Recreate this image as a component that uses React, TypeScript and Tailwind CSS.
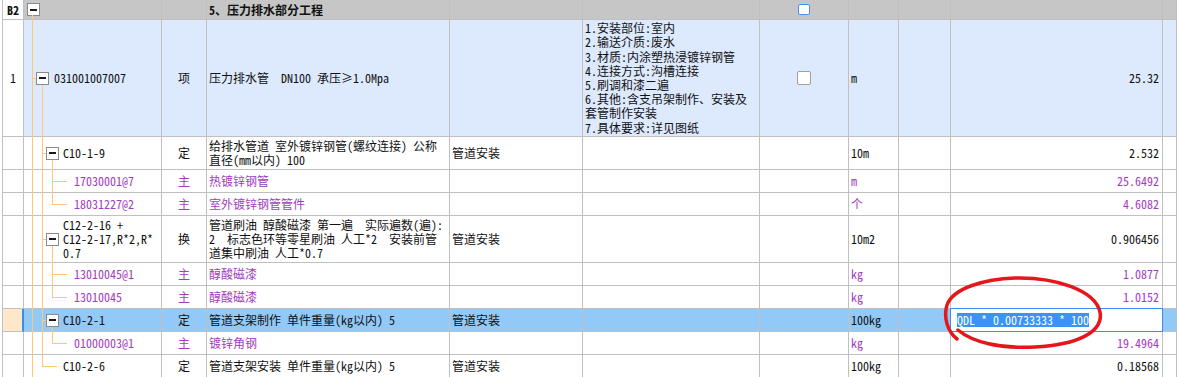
import React, { ReactNode } from "react";

const LINE = "border-r border-b border-[#c0c0c0]";
const GRID =
  "grid grid-cols-[21px_138px_45px_243px_133px_177px_89px_50px_52px_212px_1fr]";

function Minus() {
  return (
    <span className="flex h-[13px] w-[13px] shrink-0 items-center justify-center border border-[#8a8a8a] bg-white">
      <span className="h-[2px] w-[7px] bg-[#1a1a1a]" />
    </span>
  );
}

type RowProps = {
  h: string;
  bg?: string;
  numCell?: ReactNode;
  numClass?: string;
  code: ReactNode;
  codeClass: string;
  type?: string;
  name?: ReactNode;
  work?: string;
  desc?: ReactNode;
  check?: ReactNode;
  unit?: string;
  amount?: ReactNode;
  amountClass?: string;
  purple?: boolean;
  lastClass?: string;
};

function Row(p: RowProps) {
  const color = p.purple ? "text-[#a23cc0]" : "text-[#111111]";
  return (
    <div className={`${GRID} ${p.h} ${p.bg ?? "bg-white"} ${color}`}>
      <div
        className={`flex items-center justify-center ${
          p.numClass ?? `${LINE} bg-white`
        }`}
      >
        {p.numCell}
      </div>
      <div className={`${LINE} flex items-center ${p.codeClass}`}>{p.code}</div>
      <div className={`${LINE} flex items-center justify-center`}>{p.type}</div>
      <div className={`${LINE} flex items-center pl-[2px] whitespace-pre`}>{p.name}</div>
      <div className={`${LINE} flex items-center pl-[2px]`}>{p.work}</div>
      <div className={`${LINE} flex items-center pl-[2px]`}>{p.desc}</div>
      <div className={`${LINE} flex items-center justify-center`}>{p.check}</div>
      <div className={`${LINE} flex items-center pl-[2px]`}>{p.unit}</div>
      <div className={LINE} />
      <div
        className={`${LINE} relative flex items-center justify-end pr-[3px] ${
          p.amountClass ?? ""
        }`}
      >
        {p.amount}
      </div>
      <div className={`${LINE} ${p.lastClass ?? ""}`} />
    </div>
  );
}

function Boxed({ text, gap = "ml-[4px]" }: { text: ReactNode; gap?: string }) {
  return (
    <>
      <Minus />
      <span className={gap}>{text}</span>
    </>
  );
}

export default function App() {
  const orange = "#ffc878";
  return (
    <div className="relative h-[377px] w-[1177px] overflow-hidden bg-white pl-[2px] text-[12px] leading-[14px] [font-family:'Noto_Sans_Mono_CJK_SC','Noto_Sans_CJK_SC',monospace]">
      <div className="border-l border-[#c0c0c0]">
        {/* Header */}
        <div className={`${GRID} h-[20px] bg-[#c6c6c6] text-[#111111]`}>
          <div className={`${LINE} flex items-center justify-center bg-white font-bold`}>B2</div>
          <div className={`${LINE} flex items-center pl-[3px]`}>
            <Minus />
          </div>
          <div className={LINE} />
          <div className={`${LINE} flex items-center pl-[2px] font-bold`}>5、压力排水部分工程</div>
          <div className={LINE} />
          <div className={LINE} />
          <div className={`${LINE} flex items-center justify-center`}>
            <span className="h-[11px] w-[12px] rounded-[2px] border border-[#4a8fe6] bg-white" />
          </div>
          <div className={LINE} />
          <div className={LINE} />
          <div className={LINE} />
          <div className={LINE} />
        </div>

        <Row
          h="h-[117px]"
          bg="bg-[#dde9fd]"
          numCell="1"
          code={<Boxed text="031001007007" gap="ml-[5px]" />}
          codeClass="pl-[12px]"
          type="项"
          name="压力排水管  DN100 承压≥1.0Mpa"
          desc={
            <div className="leading-[14.2px]">
              1.安装部位:室内
              <br />
              2.输送介质:废水
              <br />
              3.材质:内涂塑热浸镀锌钢管
              <br />
              4.连接方式:沟槽连接
              <br />
              5.刷调和漆二遍
              <br />
              6.其他:含支吊架制作、安装及
              <br />
              套管制作安装
              <br />
              7.具体要求:详见图纸
            </div>
          }
          check={
            <span className="h-[14px] w-[14px] rounded-[2px] border border-[#a0a0a0] bg-white" />
          }
          unit="m"
          amount="25.32"
        />

        <Row
          h="h-[33px]"
          code={<Boxed text="C10-1-9" />}
          codeClass="pl-[22px]"
          type="定"
          name={
            <span>
              给排水管道 室外镀锌钢管(螺纹连接) 公称
              <br />
              直径(mm以内) 100
            </span>
          }
          work="管道安装"
          unit="10m"
          amount="2.532"
        />

        <Row
          h="h-[23px]"
          purple
          code="17030001@7"
          codeClass="pl-[50px]"
          type="主"
          name="热镀锌钢管"
          unit="m"
          amount="25.6492"
        />
        <Row
          h="h-[23px]"
          purple
          code="18031227@2"
          codeClass="pl-[50px]"
          type="主"
          name="室外镀锌钢管管件"
          unit="个"
          amount="4.6082"
        />

        <Row
          h="h-[47px]"
          code={
            <Boxed
              text={
                <>
                  C12-2-16 +
                  <br />
                  C12-2-17,R*2,R*
                  <br />
                  0.7
                </>
              }
            />
          }
          codeClass="pl-[22px]"
          type="换"
          name={
            <span>
              管道刷油 醇酸磁漆 第一遍  实际遍数(遍):
              <br />
              2  标志色环等零星刷油 人工*2  安装前管
              <br />
              道集中刷油 人工*0.7
            </span>
          }
          work="管道安装"
          unit="10m2"
          amount="0.906456"
        />

        <Row
          h="h-[23px]"
          purple
          code="13010045@1"
          codeClass="pl-[50px]"
          type="主"
          name="醇酸磁漆"
          unit="kg"
          amount="1.0877"
        />
        <Row
          h="h-[23px]"
          purple
          code="13010045"
          codeClass="pl-[50px]"
          type="主"
          name="醇酸磁漆"
          unit="kg"
          amount="1.0152"
        />

        <Row
          h="h-[23px]"
          bg="bg-[#93c9f7]"
          numClass="border-b border-[#c0c0c0] border-r-2 border-r-[#3a8ef2] bg-[#ffe7c9]"
          code={<Boxed text="C10-2-1" />}
          codeClass="pl-[22px]"
          type="定"
          name="管道支架制作 单件重量(kg以内) 5"
          work="管道安装"
          unit="100kg"
          amount={
            <div className="absolute left-[-1px] top-[-1px] flex h-[24px] w-[213px] items-center border border-[#3a8ef2] bg-white pl-[6px]">
              <span className="whitespace-pre bg-[#3993fb] text-white">QDL * 0.00733333 * 100</span>
            </div>
          }
        />

        <Row
          h="h-[23px]"
          purple
          code="01000003@1"
          codeClass="pl-[50px]"
          type="主"
          name="镀锌角钢"
          unit="kg"
          amount="19.4964"
        />
        <Row
          h="h-[23px]"
          code="C10-2-6"
          codeClass="pl-[39px]"
          type="定"
          name="管道支架安装 单件重量(kg以内) 5"
          work="管道安装"
          unit="100kg"
          amount="0.18568"
        />
      </div>

      {/* Tree connector lines */}
      <svg
        className="pointer-events-none absolute left-0 top-0"
        width="1177"
        height="377"
        viewBox="0 0 1177 377"
      >
        <g stroke={orange} strokeWidth="1" fill="none" shapeRendering="crispEdges">
          <line x1="32.5" y1="15" x2="32.5" y2="377" />
          <line x1="32" y1="78.5" x2="36" y2="78.5" />
          <line x1="42.5" y1="85" x2="42.5" y2="366.5" />
          <line x1="42" y1="153.5" x2="46" y2="153.5" />
          <line x1="52.5" y1="160" x2="52.5" y2="204.5" />
          <line x1="52" y1="181.5" x2="67" y2="181.5" />
          <line x1="52" y1="204.5" x2="67" y2="204.5" />
          <line x1="42" y1="239.5" x2="46" y2="239.5" />
          <line x1="52.5" y1="246" x2="52.5" y2="297.5" />
          <line x1="52" y1="274.5" x2="67" y2="274.5" />
          <line x1="52" y1="297.5" x2="67" y2="297.5" />
          <line x1="42" y1="320.5" x2="46" y2="320.5" />
          <line x1="52.5" y1="327" x2="52.5" y2="343.5" />
          <line x1="52" y1="343.5" x2="67" y2="343.5" />
          <line x1="42" y1="366.5" x2="57" y2="366.5" />
        </g>
      </svg>

      {/* Red hand-drawn circle */}
      <svg
        className="pointer-events-none absolute left-0 top-0"
        width="1177"
        height="377"
        viewBox="0 0 1177 377"
      >
        <path
          d="M957 339 C948 332 943 318 947 305 C953 288 985 279 1015 278 C1055 277 1095 290 1100 312 C1104 333 1075 345 1035 347 C1000 349 972 342 958 330"
          stroke="#e3171c"
          strokeWidth="3.5"
          strokeLinecap="round"
          fill="none"
        />
      </svg>
    </div>
  );
}
